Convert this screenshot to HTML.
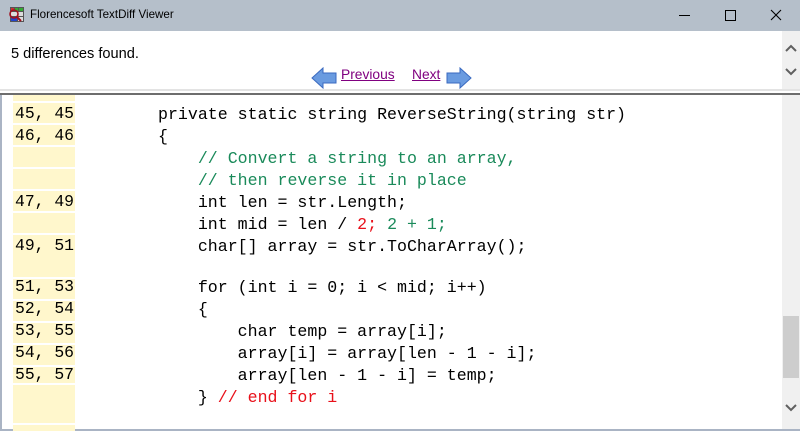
<!DOCTYPE html>
<html><head><style>
*{margin:0;padding:0;box-sizing:border-box}
body{width:800px;height:431px;overflow:hidden;background:#fff;position:relative;font-family:"Liberation Sans",sans-serif}
.abs{position:absolute}
.code{font-family:"Liberation Mono",monospace;font-size:16.6px;color:#000;white-space:pre}
.ln{position:absolute;left:13px;width:62px;background:#fff7cc}
.lt{position:absolute;left:15px;font-family:"Liberation Mono",monospace;font-size:16.4px;white-space:pre}
.c{color:#1a8a5a}.r{color:#e8101a}
</style></head><body>
<div class="abs" style="left:0;top:0;width:800px;height:31px;background:#b5bfca"></div>
<svg class="abs" style="left:8px;top:7px" width="16" height="16" viewBox="0 0 16 16">
<rect x="2" y="0" width="14" height="15" fill="#555"/>
<rect x="3" y="1" width="3" height="3" fill="#c33"/><rect x="7" y="1" width="3" height="3" fill="#3a3"/><rect x="11" y="1" width="4" height="3" fill="#3a3"/>
<rect x="3" y="5" width="12" height="4" fill="#ddd"/>
<rect x="3" y="10" width="6" height="4" fill="#24c"/><rect x="10" y="10" width="5" height="4" fill="#ddd"/>
<circle cx="6" cy="7" r="4" fill="none" stroke="#a01020" stroke-width="1.6"/><line x1="9" y1="10" x2="13" y2="14" stroke="#a01020" stroke-width="2"/>
</svg>
<div class="abs" style="left:30px;top:8px;font-size:11.6px;color:#000">Florencesoft TextDiff Viewer</div>
<div class="abs" style="left:679px;top:15px;width:11px;height:1px;background:#000"></div>
<div class="abs" style="left:725px;top:10px;width:11px;height:11px;border:1px solid #000"></div>
<svg class="abs" style="left:770px;top:9px" width="12" height="12"><path d="M1 1L11 11M11 1L1 11" stroke="#000" stroke-width="1.1"/></svg>

<div class="abs" style="left:11px;top:46px;font-size:14.6px;color:#000">5 differences found.</div>
<svg class="abs" style="left:311px;top:67px" width="26" height="22" viewBox="0 0 26 22"><path d="M1 11L12 1V6H25V16H12V21Z" fill="#6a9be0" stroke="#3a6ac0" stroke-width="1"/></svg>
<div class="abs" style="left:341px;top:67px;font-size:13.8px;color:#800080;text-decoration:underline">Previous</div>
<div class="abs" style="left:412px;top:67px;font-size:13.8px;color:#800080;text-decoration:underline">Next</div>
<svg class="abs" style="left:446px;top:67px" width="26" height="22" viewBox="0 0 26 22"><path d="M25 11L14 1V6H1V16H14V21Z" fill="#6a9be0" stroke="#3a6ac0" stroke-width="1"/></svg>
<div class="abs" style="left:782px;top:31px;width:18px;height:58px;background:#f0f0f0"></div>
<svg class="abs" style="left:785px;top:44px" width="12" height="32"><path d="M1 7L6 2L11 7M1 25L6 30L11 25" fill="none" stroke="#606060" stroke-width="2"/></svg>

<div class="abs" style="left:0;top:89px;width:800px;height:2px;background:#e3e3e3"></div>
<div class="abs" style="left:0;top:93px;width:800px;height:2px;background:#6d6d6d"></div>
<div class="abs" style="left:0;top:95px;width:2px;height:336px;background:#aab4c4"></div>
<div class="abs" style="left:0;top:429px;width:800px;height:2px;background:#aab4c4"></div>

<div class="ln" style="top:95px;height:6px"></div>
<div class="ln" style="top:103px;height:20px"></div>
<div class="ln" style="top:125px;height:20px"></div>
<div class="ln" style="top:147px;height:20px"></div>
<div class="ln" style="top:169px;height:20px"></div>
<div class="ln" style="top:191px;height:20px"></div>
<div class="ln" style="top:213px;height:20px"></div>
<div class="ln" style="top:235px;height:42px"></div>
<div class="ln" style="top:279px;height:20px"></div>
<div class="ln" style="top:301px;height:20px"></div>
<div class="ln" style="top:323px;height:20px"></div>
<div class="ln" style="top:345px;height:20px"></div>
<div class="ln" style="top:367px;height:16px"></div>
<div class="ln" style="top:385px;height:38px"></div>
<div class="ln" style="top:425px;height:6px"></div>

<div class="lt" style="top:104px">45, 45</div>
<div class="lt" style="top:126px">46, 46</div>
<div class="lt" style="top:192px">47, 49</div>
<div class="lt" style="top:236px">49, 51</div>
<div class="lt" style="top:277px">51, 53</div>
<div class="lt" style="top:299px">52, 54</div>
<div class="lt" style="top:321px">53, 55</div>
<div class="lt" style="top:343px">54, 56</div>
<div class="lt" style="top:365px">55, 57</div>

<div class="abs code" style="left:158px;top:104px;line-height:22px">private static string ReverseString(string str)
{
    <span class="c">// Convert a string to an array,</span>
    <span class="c">// then reverse it in place</span>
    int len = str.Length;
    int mid = len / <span class="r">2;</span> <span class="c">2 + 1;</span>
    char[] array = str.ToCharArray();
</div>
<div class="abs code" style="left:158px;top:277px;line-height:22px">    for (int i = 0; i &lt; mid; i++)
    {
        char temp = array[i];
        array[i] = array[len - 1 - i];
        array[len - 1 - i] = temp;
    } <span class="r">// end for i</span>
</div>

<div class="abs" style="left:782px;top:95px;width:18px;height:334px;background:#f0f0f0"></div>
<div class="abs" style="left:783px;top:316px;width:16px;height:62px;background:#cdcdcd"></div>
<svg class="abs" style="left:785px;top:403px" width="12" height="10"><path d="M1 2L6 7L11 2" fill="none" stroke="#606060" stroke-width="2"/></svg>
</body></html>
